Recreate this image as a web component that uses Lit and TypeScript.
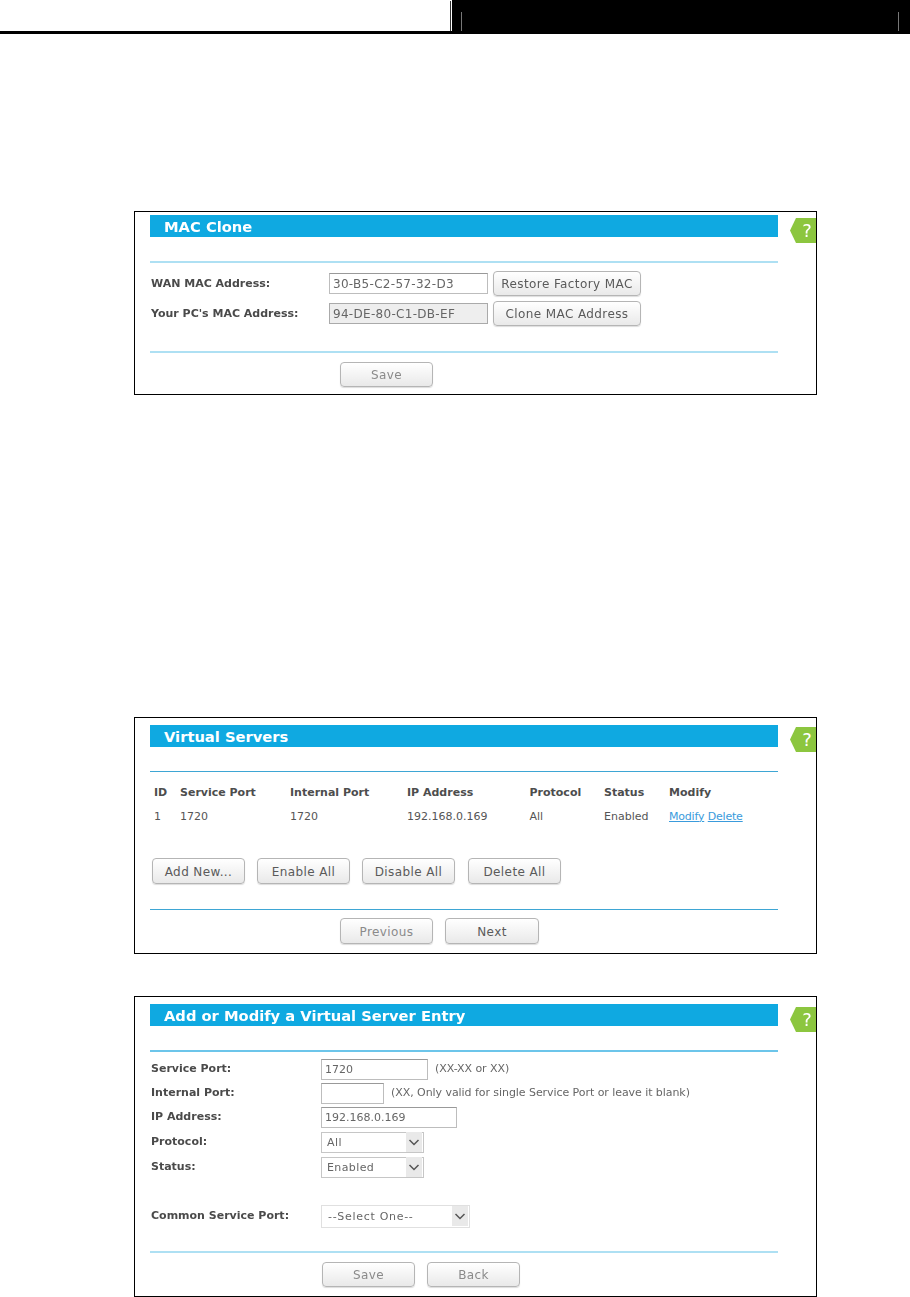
import { LitElement, html, css } from "lit";
import { customElement } from "lit/decorators.js";

const chevron = html`<svg class="chev" width="16" height="20" viewBox="0 0 16 20" aria-hidden="true"><rect width="16" height="20" fill="#e9e9e9"/><path d="M3.5 8 L8 12.5 L12.5 8" fill="none" stroke="#555" stroke-width="1.5"/></svg>`;

@customElement("app-root")
export class AppRoot extends LitElement {
  static styles = css`
    :host { display: block; width: 910px; height: 1297px; overflow: hidden; background: #fff; font-family: "DejaVu Sans", Verdana, sans-serif; font-size: 11px; color: #4d4d4d; }
    .hdr { display: flex; height: 31px; border-bottom: 3px solid #000; }
    .hdr-l { width: 450px; border-right: 1px solid #333; margin-top: 1px; }
    .hdr-r { flex: 1; margin-left: 1px; background: #000; padding: 12px 11px 0 9px; }
    .hdr-in { height: 19px; border-left: 1px solid #777; border-right: 1px solid #777; }
    main { padding-left: 134px; }
    .card { position: relative; width: 683px; box-sizing: border-box; border: 1px solid #000; padding: 0 38px 0 15px; }
    .c1 { margin-top: 177px; height: 184px; padding-top: 3px; }
    .c2 { margin-top: 322px; height: 237px; padding-top: 7px; }
    .c3 { margin-top: 42px; height: 301px; padding-top: 7px; }
    .soft > * { filter: blur(0.7px); }
    .title { height: 22px; background: #0fa9e1; color: #fff; font-weight: 700; font-size: 14.7px; line-height: 24px; padding-left: 14px; }
    .help { position: absolute; right: 0; width: 26px; height: 25px; background: #8cc63f; color: #fff; font-size: 18px; line-height: 25px; text-align: center; padding-left: 8px; box-sizing: border-box; clip-path: polygon(6px 0, 100% 0, 100% 100%, 6px 100%, 0 50%); }
    .c1 .help { top: 6px; }
    .c2 .help { top: 9px; }
    .c3 .help { top: 10px; }
    .rule { margin-top: 24px; height: 2px; background: #aee0f3; }
    .rule.thin { height: 1px; background: #3ea6d4; }
    .rule.mid { height: 1.5px; background: #6cc5ea; }
    .btn { box-sizing: border-box; width: 93px; height: 25px; padding-top: 1px; border: 1px solid #b5b5b5; border-radius: 4px; background: linear-gradient(#fff, #e9e9e9); display: flex; align-items: center; justify-content: center; font-size: 12px; letter-spacing: 0.4px; color: #5a5a5a; box-shadow: 0 1px 1px #ddd; }
    .btn.dim { color: #8a8a8a; }
    .btn.tall { height: 26px; }
    .btn.wide { width: 148px; }
    .btn.shift { margin-left: 1px; }
    .btn.next { width: 94px; }
    .label { font-weight: 700; color: #4a4a4a; }
    .field { box-sizing: border-box; height: 21px; border: 1px solid #bdbdbd; border-top-color: #999; padding: 0 3px; font: inherit; color: #666; background: #fff; outline: none; }
    .field.off { background: #eee; border-color: #aaa; }
    .row { display: flex; align-items: center; }
    .c1 .label { width: 178px; padding-left: 1px; margin-right: -5px; }
    .c1 .row { gap: 5px; }
    .c1 .field { width: 159px; font-size: 12px; letter-spacing: 0.3px; }
    .c1 .r1 { margin-top: 8px; }
    .c1 .r2 { margin-top: 5px; }
    .c1 .rule.end { margin-top: 25px; }
    .nav { display: flex; gap: 12px; padding-left: 190px; }
    .c1 .nav { margin-top: 9px; }
    .thead, .tbody { display: grid; grid-template-columns: 26px 110px 117px 122.5px 74.5px 65px 1fr; height: 24px; align-items: center; padding-left: 4px; }
    .thead { margin-top: 8px; font-weight: 700; }
    .tbody { color: #555; }
    a { color: #3a9bdc; text-decoration: underline; letter-spacing: -0.2px; }
    .acts { display: flex; gap: 12px; margin: 30px 0 0 2px; }
    .c2 .rule.end { margin-top: 25px; }
    .c2 .nav { margin-top: 8px; }
    .c3 .label { width: 170px; padding-left: 1px; margin-bottom: 2px; }
    .hint { margin-left: 7px; color: #666; font-size: 11px; letter-spacing: -0.06px; margin-bottom: 2px; }
    .w107 { width: 107px; }
    .w63 { width: 63px; }
    .w136 { width: 136px; }
    .select { box-sizing: border-box; height: 21px; width: 103px; border: 1px solid #c6c6c6; padding: 0 1px 0 5px; display: flex; align-items: center; justify-content: space-between; color: #666; letter-spacing: 0.4px; background: #fff; }
    .select.big { width: 149px; height: 23px; border-color: #e0e0e0; padding-left: 6px; letter-spacing: 0.7px; }
    .chev { display: block; flex: none; }
    .m7 { margin-top: 7px; }
    .m3 { margin-top: 3px; }
    .m4 { margin-top: 4px; }
    .m27 { margin-top: 27px; }
    .c3 .rule.end { margin-top: 23px; }
    .c3 .nav { margin-top: 9px; padding-left: 172px; }
  `;

  render() {
    return html`
      <div class="hdr">
        <div class="hdr-l"></div>
        <div class="hdr-r"><div class="hdr-in"></div></div>
      </div>
      <main>
        <section class="card c1 soft">
          <div class="title">MAC Clone</div>
          <div class="help">?</div>
          <div class="rule"></div>
          <div class="row r1">
            <span class="label">WAN MAC Address:</span>
            <input class="field" .value=${"30-B5-C2-57-32-D3"} />
            <div class="btn wide">Restore Factory MAC</div>
          </div>
          <div class="row r2">
            <span class="label">Your PC's MAC Address:</span>
            <input class="field off" .value=${"94-DE-80-C1-DB-EF"} />
            <div class="btn wide">Clone MAC Address</div>
          </div>
          <div class="rule end"></div>
          <div class="nav"><div class="btn dim">Save</div></div>
        </section>

        <section class="card c2">
          <div class="title">Virtual Servers</div>
          <div class="help">?</div>
          <div class="rule thin"></div>
          <div class="thead">
            <span>ID</span><span>Service Port</span><span>Internal Port</span><span>IP Address</span><span>Protocol</span><span>Status</span><span>Modify</span>
          </div>
          <div class="tbody">
            <span>1</span><span>1720</span><span>1720</span><span>192.168.0.169</span><span>All</span><span>Enabled</span>
            <span><a>Modify</a> <a>Delete</a></span>
          </div>
          <div class="acts">
            <div class="btn tall">Add New...</div>
            <div class="btn tall">Enable All</div>
            <div class="btn tall">Disable All</div>
            <div class="btn tall shift">Delete All</div>
          </div>
          <div class="rule thin end"></div>
          <div class="nav">
            <div class="btn tall dim">Previous</div>
            <div class="btn tall next">Next</div>
          </div>
        </section>

        <section class="card c3 soft">
          <div class="title">Add or Modify a Virtual Server Entry</div>
          <div class="help">?</div>
          <div class="rule mid"></div>
          <div class="row m7">
            <span class="label">Service Port:</span>
            <input class="field w107" .value=${"1720"} />
            <span class="hint">(XX-XX or XX)</span>
          </div>
          <div class="row m3">
            <span class="label">Internal Port:</span>
            <input class="field w63" />
            <span class="hint">(XX, Only valid for single Service Port or leave it blank)</span>
          </div>
          <div class="row m3">
            <span class="label">IP Address:</span>
            <input class="field w136" .value=${"192.168.0.169"} />
          </div>
          <div class="row m4">
            <span class="label">Protocol:</span>
            <div class="select"><span>All</span>${chevron}</div>
          </div>
          <div class="row m4">
            <span class="label">Status:</span>
            <div class="select"><span>Enabled</span>${chevron}</div>
          </div>
          <div class="row m27">
            <span class="label">Common Service Port:</span>
            <div class="select big"><span>--Select One--</span>${chevron}</div>
          </div>
          <div class="rule end"></div>
          <div class="nav">
            <div class="btn dim">Save</div>
            <div class="btn dim">Back</div>
          </div>
        </section>
      </main>
    `;
  }
}
